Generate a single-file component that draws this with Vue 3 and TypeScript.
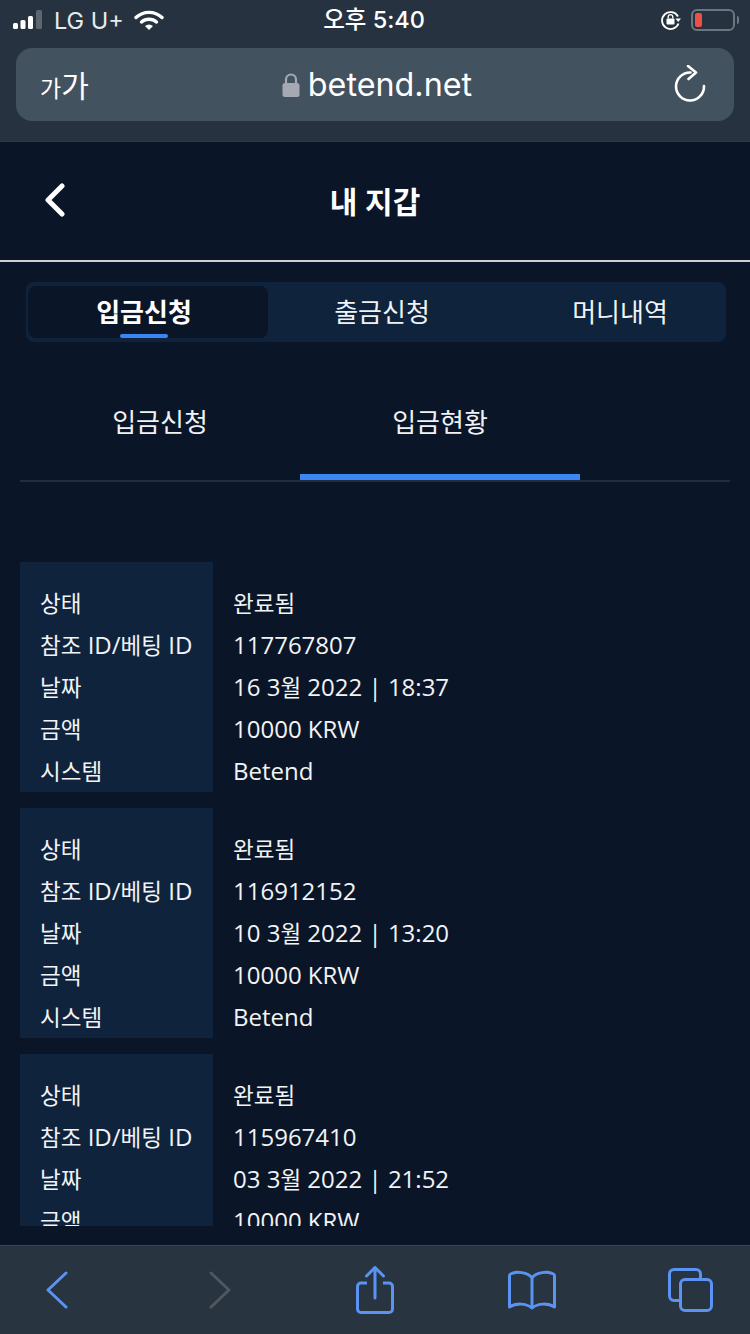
<script setup lang="ts">
interface Row {
  label: string
  value: string
}

const statusRows = (id: string, date: string): Row[] => [
  { label: '상태', value: '완료됨' },
  { label: '참조 ID/베팅 ID', value: id },
  { label: '날짜', value: date },
  { label: '금액', value: '10000 KRW' },
  { label: '시스템', value: 'Betend' }
]

const records: Row[][] = [
  statusRows('117767807', '16 3월 2022 | 18:37'),
  statusRows('116912152', '10 3월 2022 | 13:20'),
  statusRows('115967410', '03 3월 2022 | 21:52')
]

const mainTabs = ['입금신청', '출금신청', '머니내역']

// hangul runs a bit smaller than the latin text next to them
const segments = (text: string) => text.split(/([가-힣]+)/).filter(Boolean)
const isHangul = (text: string) => /[가-힣]/.test(text)
</script>

<template>
  <div class="app">
    <div class="browser-top">
      <div class="status-bar">
        <div class="status-left">
          <svg class="signal" width="34" height="20" viewBox="0 0 34 20">
            <rect x="0" y="13" width="5" height="6" rx="1.5" fill="#fff" />
            <rect x="7.5" y="10" width="5" height="9" rx="1.5" fill="#fff" />
            <rect x="15" y="6" width="5" height="13" rx="1.5" fill="#fff" />
            <rect x="23" y="0" width="6" height="19" rx="1.5" fill="#5c6670" />
          </svg>
          <span class="carrier">LG U+</span>
          <svg width="30" height="22" viewBox="0 0 30 22">
            <path d="M2 8.500 A19 19 0 0 1 28 8.500" fill="none" stroke="#fff" stroke-width="3.400" stroke-linecap="round" />
            <path d="M7.500 13 A11.500 11.500 0 0 1 22.500 13" fill="none" stroke="#fff" stroke-width="3.400" stroke-linecap="round" />
            <path d="M11 17 L15 21 L19 17 A6 6 0 0 0 11 17 Z" fill="#fff" />
          </svg>
        </div>
        <span class="clock">오후 5:40</span>
        <div class="status-right">
          <svg width="22" height="22" viewBox="0 0 22 22">
            <path d="M18 7.500 A8.500 8.500 0 1 0 18.500 14.500" fill="none" stroke="#fff" stroke-width="1.800" />
            <path d="M15.500 9.500 L21 9.500 L18.200 13 Z" fill="#fff" />
            <rect x="6.500" y="9.500" width="8" height="6" rx="1" fill="#fff" />
            <path d="M8.200 9.500 V8 A2.300 2.300 0 0 1 12.800 8 V9.500" fill="none" stroke="#fff" stroke-width="1.300" />
          </svg>
          <div class="battery"><span class="battery-level"></span></div>
          <span class="battery-cap"></span>
        </div>
      </div>

      <div class="url-bar">
        <span class="text-size"><small>가</small>가</span>
        <div class="url">
          <svg width="18" height="26" viewBox="0 0 18 26">
            <path d="M4 12 V7.500 A5 5 0 0 1 14 7.500 V12" fill="none" stroke="#a4a9b4" stroke-width="2.200" />
            <rect x="0.500" y="11" width="17" height="14" rx="2.500" fill="#a4a9b4" />
          </svg>
          <span>betend.net</span>
        </div>
        <svg class="reload" width="32" height="38" viewBox="0 0 32 38">
          <path d="M16.500 7.500 A14 14 0 1 0 30 21" fill="none" stroke="#fff" stroke-width="2.600" stroke-linecap="round" />
          <path d="M14 1 L22 7.500 L14.500 14" fill="none" stroke="#fff" stroke-width="2.600" stroke-linecap="round" stroke-linejoin="round" />
        </svg>
      </div>
    </div>

    <main class="page">
      <header class="page-header">
        <svg class="back" width="22" height="34" viewBox="0 0 22 34">
          <path d="M18 3 L4 17 L18 31" fill="none" stroke="#fff" stroke-width="5" stroke-linecap="round" stroke-linejoin="round" />
        </svg>
        <h1>내 지갑</h1>
      </header>

      <div class="main-tabs">
        <div v-for="(tab, i) in mainTabs" :key="tab" class="main-tab" :class="{ active: i === 0 }">
          {{ tab }}
        </div>
      </div>

      <div class="sub-tabs">
        <div class="sub-tab">입금신청</div>
        <div class="sub-tab active">입금현황</div>
      </div>

      <div class="records">
        <div v-for="(record, i) in records" :key="i" class="record">
          <div class="labels">
            <div v-for="row in record" :key="row.label" class="cell">
              <span v-for="(part, j) in segments(row.label)" :key="j" :class="{ ko: isHangul(part) }">{{ part }}</span>
            </div>
          </div>
          <div class="values">
            <div v-for="row in record" :key="row.label" class="cell">
              <span v-for="(part, j) in segments(row.value)" :key="j" :class="{ ko: isHangul(part) }">{{ part }}</span>
            </div>
          </div>
        </div>
      </div>
    </main>

    <nav class="toolbar">
      <svg width="22" height="38" viewBox="0 0 22 38">
        <path d="M20 2 L2 19 L20 36" fill="none" stroke="#5a93f2" stroke-width="3" stroke-linecap="round" stroke-linejoin="round" />
      </svg>
      <svg width="22" height="38" viewBox="0 0 22 38">
        <path d="M2 2 L20 19 L2 36" fill="none" stroke="#50575f" stroke-width="3" stroke-linecap="round" stroke-linejoin="round" />
      </svg>
      <svg width="38" height="48" viewBox="0 0 38 48">
        <path d="M11 17 H5 A3.500 3.500 0 0 0 1.500 20.500 V43 A3.500 3.500 0 0 0 5 46.500 H33 A3.500 3.500 0 0 0 36.500 43 V20.500 A3.500 3.500 0 0 0 33 17 H27" fill="none" stroke="#5a93f2" stroke-width="3" />
        <path d="M19 32 V2 M10.500 10 L19 1.500 L27.500 10" fill="none" stroke="#5a93f2" stroke-width="3" stroke-linecap="round" stroke-linejoin="round" />
      </svg>
      <svg width="48" height="40" viewBox="0 0 48 40">
        <path d="M24 8 C20 2 8 1 2.500 4 Q1.500 4.500 1.500 6 V37 C8 33 18 33 24 38 C30 33 40 33 46.500 37 V6 Q46.500 4.500 45.500 4 C40 1 28 2 24 8 V38" fill="none" stroke="#5a93f2" stroke-width="3" stroke-linejoin="round" stroke-linecap="round" />
      </svg>
      <div class="tabs-icon"><span class="back-square"></span><span class="front-square"></span></div>
    </nav>
  </div>
</template>

<style>
body {
  background: #0a1628;
}
</style>

<style scoped>
.app {
  width: 750px;
  height: 1334px;
  display: flex;
  flex-direction: column;
  overflow: hidden;
  background: #0a1628;
  color: #fff;
  font-family: "Open Sans", "Noto Sans CJK KR", sans-serif;
}

.browser-top {
  height: 142px;
  box-sizing: border-box;
  padding: 0 16px;
  background: #26323f;
  border-bottom: 1px solid #2e3a47;
}

.status-bar {
  height: 48px;
  display: flex;
  align-items: center;
  justify-content: space-between;
  position: relative;
  padding-bottom: 8px;
  box-sizing: border-box;
}

.status-left {
  display: flex;
  align-items: center;
  gap: 10px;
  margin-left: -3px;
}

.carrier {
  font-family: Inter, sans-serif;
  font-size: 23.5px;
  font-weight: 400;
  color: #e8eaec;
  margin-left: -3px;
}

.clock {
  position: absolute;
  left: -2px;
  right: 0;
  top: 6px;
  text-align: center;
  font-family: Inter, "Noto Sans CJK KR", sans-serif;
  font-size: 23.5px;
  font-weight: 500;
  line-height: 28px;
}

.status-right {
  display: flex;
  align-items: center;
  gap: 9px;
  margin-right: -5px;
}

.battery {
  width: 44px;
  height: 22px;
  box-sizing: border-box;
  border: 2px solid #6d757e;
  border-radius: 6px;
  padding: 2px;
}

.battery-level {
  display: block;
  width: 7px;
  height: 14px;
  border-radius: 2px;
  background: #ee5045;
}

.battery-cap {
  width: 2px;
  height: 8px;
  margin-left: -7px;
  border-radius: 0 2px 2px 0;
  background: #6d757e;
}

.url-bar {
  height: 73px;
  display: flex;
  align-items: center;
  justify-content: space-between;
  padding: 0 28px 0 24px;
  border-radius: 16px;
  background: #43525f;
  position: relative;
}

.text-size {
  font-family: "Noto Sans CJK KR", sans-serif;
  font-size: 30px;
  line-height: 32px;
  margin-top: 2px;
}

.text-size small {
  font-size: 23px;
}

.url {
  position: absolute;
  left: 4px;
  right: 0;
  top: 0;
  bottom: 0;
  display: flex;
  align-items: center;
  justify-content: center;
  gap: 8px;
  font-family: Inter, sans-serif;
  font-size: 32.3px;
  line-height: 73px;
  pointer-events: none;
}

.reload {
  margin-top: -2px;
}

.page {
  flex: 1;
  min-height: 0;
}

.page-header {
  height: 118px;
  display: flex;
  align-items: center;
  justify-content: center;
  position: relative;
  border-bottom: 2px solid #cfd0d2;
}

.page-header h1 {
  margin: 0;
  font-size: 30px;
  font-weight: 700;
  line-height: 40px;
  padding-top: 2px;
}

.back {
  position: absolute;
  left: 44px;
  top: 41px;
}

.main-tabs {
  height: 60px;
  margin: 20px 24px 0 26px;
  padding: 4px 2px;
  box-sizing: border-box;
  display: grid;
  grid-template-columns: 240px 228px 1fr;
  border-radius: 8px;
  background: #0f233d;
}

.main-tab {
  font-size: 26px;
  line-height: 52px;
  text-align: center;
  color: #f0f2f4;
}

.main-tab:last-child {
  padding-left: 20px;
}

.main-tab.active {
  position: relative;
  padding-right: 8px;
  border-radius: 8px;
  background: #0a1628;
  font-weight: 700;
  color: #fff;
}

.main-tab.active::after {
  content: "";
  position: absolute;
  left: 92px;
  bottom: 0;
  width: 48px;
  height: 4px;
  border-radius: 2px;
  background: #3b86f5;
}

.sub-tabs {
  margin: 0 20px;
  height: 140px;
  display: flex;
  box-sizing: border-box;
  border-bottom: 2px solid #222e3d;
}

.sub-tab {
  width: 280px;
  height: 138px;
  font-size: 26px;
  line-height: 36px;
  padding-top: 62px;
  text-align: center;
  color: #f0f2f4;
  box-sizing: border-box;
}

.sub-tab.active {
  border-bottom: 6px solid #3b86f5;
}

.records {
  height: 664px;
  margin: 80px 20px 0;
  overflow: hidden;
  display: flex;
  flex-direction: column;
  gap: 16px;
}

.record {
  flex: none;
  display: flex;
  height: 230px;
}

.labels {
  width: 193px;
  padding: 20px;
  box-sizing: border-box;
  background: #0f233d;
}

.values {
  padding: 20px;
  flex: 1;
}

.cell {
  height: 42px;
  font-size: 24px;
  line-height: 42px;
  color: #f2f3f5;
  white-space: pre;
}

.ko {
  font-size: 22.5px;
}

.toolbar {
  height: 89px;
  flex: none;
  box-sizing: border-box;
  border-top: 1px solid #3a4652;
  background: #28343f;
  display: grid;
  grid-template-columns: 114px 212px 98px 216px 100px;
  align-items: center;
  justify-items: center;
}

.tabs-icon {
  width: 45px;
  height: 44px;
  position: relative;
}

.back-square,
.front-square {
  position: absolute;
  width: 28px;
  height: 28px;
  box-sizing: content-box;
  border: 3px solid #5a93f2;
  border-radius: 6px;
}

.back-square {
  left: 0;
  top: 0;
}

.front-square {
  left: 11px;
  top: 10px;
  background: #28343f;
}
</style>
